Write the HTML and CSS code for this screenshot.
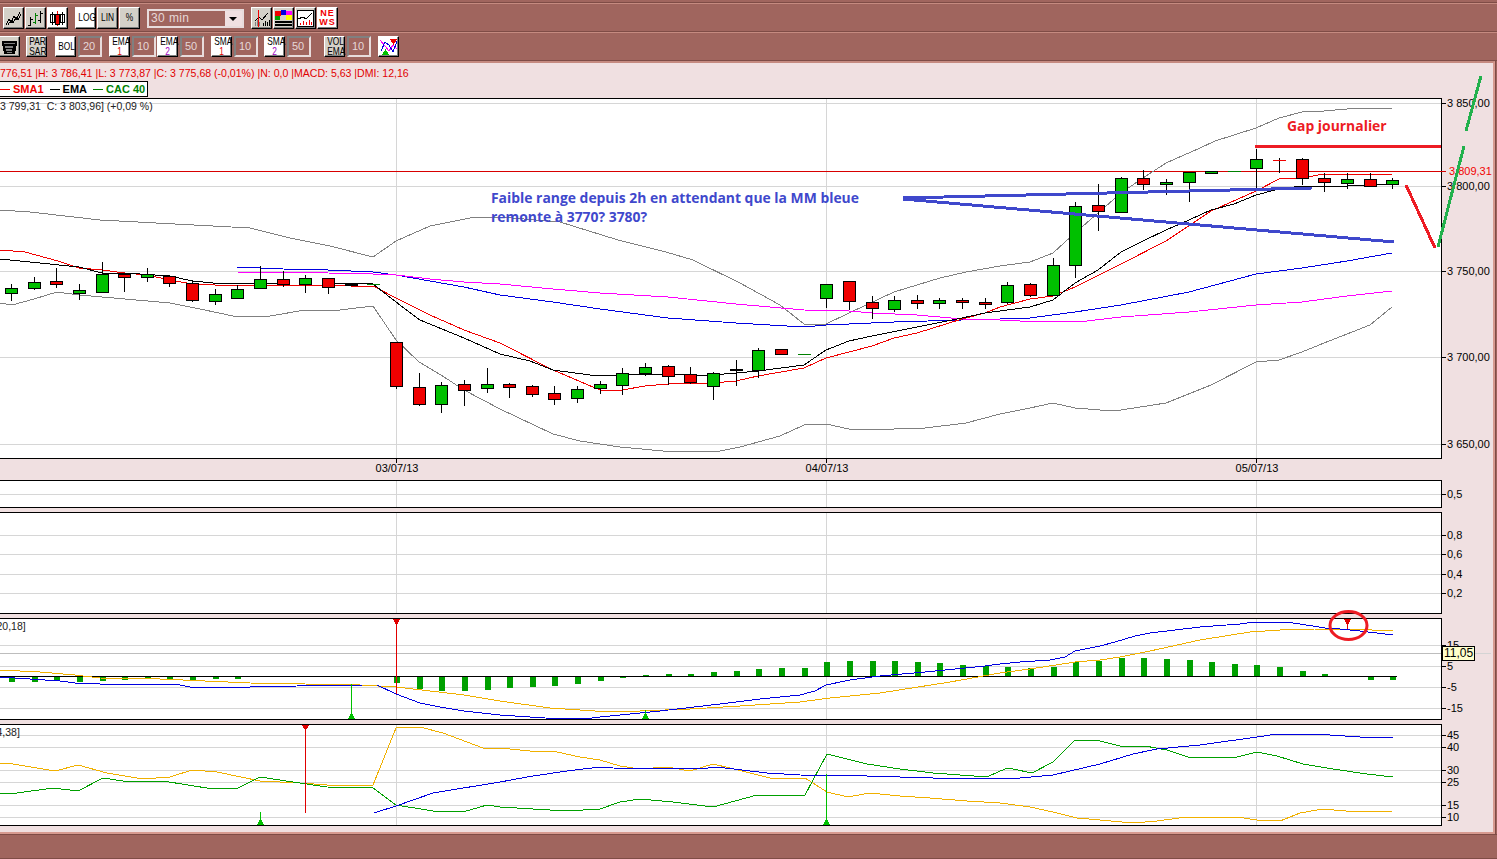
FILE: index.html
```html
<!DOCTYPE html>
<html lang="fr">
<head>
<meta charset="utf-8">
<title>CAC 40 - 30 min</title>
<link rel="stylesheet" href="styles.css">
</head>
<body>
<div class="app">
  <div class="toolbar t1">
    <div class="group">
      <button class="btn"><svg viewBox="0 0 19 19"><path class="ik" d="M2 16L5 10 7 14 10 7 12 11 16 3M4 16L7 11 9 14 12 8 14 11 17 5"/></svg></button>
      <button class="btn"><svg viewBox="0 0 19 19"><path class="ik" d="M4.5 8V17M2 16H4.5M4.5 10H7M14.5 2V14M12 11H14.5M14.5 4H17"/><path class="ig" d="M9.5 4V15M7 13H9.5M9.5 6H12"/></svg></button>
      <button class="btn on"><svg viewBox="0 0 19 19"><path class="ik" d="M4.5 3V16M14.5 3V16"/><path class="iw" d="M3.500 5.500h3v8h-3zM13.500 5.500h3v8h-3z"/><path class="ik" d="M2.500 5.500h4v8h-4zM12.500 5.500h4v8h-4z"/><path class="ir2" d="M9.500 2V17"/><path class="ir" d="M7.500 5.500h4v10h-4z"/></svg></button>
    </div>
    <div class="group">
      <button class="btn on"><span class="cap">LOG</span></button>
      <button class="btn"><span class="cap">LIN</span></button>
      <button class="btn"><span class="cap">%</span></button>
    </div>
    <div class="select"><span class="select-value">30 min</span><span class="select-arrow"></span></div>
    <div class="group">
      <button class="btn"><svg viewBox="0 0 19 19"><path class="igy" d="M3 17V13M5 17V11M7 17V13"/><path class="ik" d="M11 17V14M13 17V12M15 17V13M17 17V11M3 12L7 8 10 11 16 4"/><path class="ir2" d="M6.500 1V18"/></svg></button>
      <button class="btn"><svg viewBox="0 0 19 19"><path fill="#f00000" d="M1 2h6v5H1z"/><path fill="#0000e0" d="M7 1h5v5H7z"/><path fill="#ff00ff" d="M12 2h6v4h-6z"/><path fill="#00a000" d="M1 7h5v4H1z"/><path fill="#ffff00" d="M12 6h6v5h-6z"/><path fill="#000" d="M1 12h17v2H1zM1 15h17v2H1z"/></svg></button>
      <button class="btn"><svg viewBox="0 0 19 19"><path fill="#fff" d="M1 1h17v17H1z"/><path class="ik" d="M1.500 1.500h16v16h-16zM2 10L7 8 10 10 16 4"/><path class="ir2" d="M4.500 16V14M7.500 16V12M10.500 16V13M13.500 16V11M15.500 16V13"/></svg></button>
      <button class="btn on news"><span>NE</span><span>WS</span></button>
    </div>
  </div>
  <div class="toolbar t2">
    <button class="btn trash"><svg viewBox="0 0 19 19"><path fill="#000" d="M2 4h15v2l-2 11H4L2 6z"/><path class="igy" d="M4 6.500h11M5 9.500l1 1 1-1 1 1 1-1 1 1 1-1 1 1 1-1M6 12.500l1 1 1-1 1 1 1-1 1 1 1-1M7 15.500h5"/></svg></button>
    <button class="btn m6"><span class="cap">PAR</span><span class="cap">SAR</span></button>
    <button class="btn on m8"><span class="cap">BOL</span></button>
    <div class="num">20</div>
    <button class="btn on m7"><span class="cap">EMA</span><span class="cap c1">1</span></button>
    <div class="num">10</div>
    <button class="btn on m1"><span class="cap">EMA</span><span class="cap c2">2</span></button>
    <div class="num">50</div>
    <button class="btn on m7"><span class="cap">SMA</span><span class="cap c1">1</span></button>
    <div class="num">10</div>
    <button class="btn on m6"><span class="cap">SMA</span><span class="cap c2">2</span></button>
    <div class="num">50</div>
    <button class="btn m13"><span class="cap">VOL</span><span class="cap">EMA</span></button>
    <div class="num">10</div>
    <button class="btn on m7"><svg viewBox="0 0 19 19"><path class="im" d="M1 3L6 9 10 14 14 8 18 12"/><path class="ib" d="M2 14L6 5 10 8 14 15 18 4"/><path fill="#f00000" d="M11 2h7l-3.500 6z"/><path fill="#00c000" d="M3 18l3.500-6 3.500 6z"/></svg></button>
  </div>

  <div class="workspace">
    <div class="info">776,51 |H: 3 786,41 |L: 3 773,87 |C: 3 775,68 (-0,01%) |N: 0,0 |MACD: 5,63 |DMI: 12,16</div>
    <div class="legend">
      <span class="key key-red"></span><b class="red">SMA1</b>
      <span class="key key-black"></span><b>EMA</b>
      <span class="key key-green"></span><b class="green">CAC 40</b>
    </div>

    <svg class="pane pane-main" viewBox="0 98 1493 382">
      <rect class="plot" x="-2" y="98.500" width="1443.500" height="360"/>
      <path class="grid" d="M0 103.500H1441M0 186.500H1441M0 271.500H1441M0 357.500H1441M0 444.500H1441M396.500 99V458M826.500 99V458M1256.500 99V458"/>
      <path class="frame" d="M1441 103.500H1446M1441 186.500H1446M1441 271.500H1446M1441 357.500H1446M1441 444.500H1446M396.500 458V463M826.500 458V463M1256.500 458V463"/>
      <text class="lbl" x="0" y="110" xml:space="preserve">3 799,31  C: 3 803,96] (+0,09 %)</text>
      <path class="last" d="M0 171.500H1446"/>
      <polyline class="boll" points="0,210 30,212 100,220 175,224 250,228 290,238 330,246 373,257 396,241 430,226 470,218 500,217 560,222 618,240 666,252 693,260 740,283 780,305 804,324 826,324 849,313 894,292 940,278 966,272 1000,266 1030,262 1053,253 1075,233 1121,193 1143,178 1166,163 1200,148 1215,141 1256,128 1279,118 1302,112 1324,111 1347,109 1370,108 1392,109"/>
      <polyline class="boll" points="0,303 12,305 34,299 57,292 79,295 102,297 125,299 170,303 200,309 233,316 270,316 305,310 340,310 373,306 396,340 419,362 441,375 464,390 500,409 553,434 580,441 620,447 663,451 690,452 720,451 740,447 780,436 804,425 826,424 849,429 894,429 925,428 966,423 1000,414 1030,408 1053,403 1075,408 1100,410 1121,410 1166,403 1211,385 1256,362 1279,360 1302,352 1324,343 1370,325 1392,307"/>
      <polyline class="ma-blue" points="237,267 283,269 328,270 373,272 396,275 430,281 464,287 500,295 553,302 600,309 668,318 736,323 804,327 826,325 849,324 894,322 962,320 1000,319 1030,318 1075,312 1121,305 1189,292 1256,274 1302,268 1347,261 1392,253"/>
      <polyline class="ma-mag" points="237,272 328,273 373,274 396,275 430,279 464,282 500,284 553,289 600,293 668,297 736,304 781,308 804,310 849,311 872,313 917,315 962,319 1000,320 1020,321 1087,321 1121,317 1189,312 1256,305 1302,302 1347,296 1392,291"/>
      <polyline class="ma-red" points="0,250 25,252 58,261 79,268 102,270 125,273 147,275 170,280 192,284 215,285 283,285 328,285 351,286 373,286 396,298 430,315 464,330 500,343 553,370 600,390 622,390 645,386 668,384 713,383 736,381 758,376 804,368 826,358 849,352 872,346 894,338 917,333 962,319 985,313 1000,307 1030,299 1053,296 1075,287 1121,264 1166,241 1211,211 1256,191 1279,179 1302,178 1324,174 1392,174"/>
      <polyline class="ma-black" points="0,259 30,262 79,267 102,273 125,273 170,276 192,281 213,283 237,284 283,283 328,283 373,284 396,302 420,320 464,338 500,354 530,361 553,370 590,375 600,375 622,375 668,374 700,376 736,373 758,371 804,365 826,350 849,341 872,336 917,327 962,318 985,313 1000,311 1030,307 1053,300 1075,283 1098,270 1121,252 1143,241 1166,230 1189,220 1211,210 1234,204 1256,195 1279,189 1302,186 1347,186 1392,184"/>
      <path class="frame" d="M11.500 284V301M34.500 277V290M56.500 268V288M79.500 284V300M102.500 262V292M124.500 273V292M147.500 268V282M169.500 275V287M192.500 280V302M215.500 289V305M237.500 285V299M260.500 266V289M283.500 271V287M305.500 275V293M328.500 278V294M396.500 342V389M419.500 373V406M441.500 382V413M464.500 380V406M487.500 368V393M509.500 383V398M532.500 385V397M554.500 386V405M577.500 386V403M600.500 381V394M622.500 368V395M645.500 363V376M668.500 365V385M690.500 367V384M713.500 372V400M736.500 360V386M758.500 348V378M826.500 284V308M849.500 281V310M872.500 296V319M894.500 296V312M917.500 295V309M939.500 298V309M962.500 298V309M985.500 298V309M1007.500 282V304M1030.500 283V297M1053.500 258V296M1075.500 202V278M1098.500 184V231M1121.500 177V213M1143.500 170V190M1166.500 179V195M1189.500 172V202M1256.500 149V190M1279.500 158V173M1302.500 158V185M1324.500 173V192M1347.500 173V189M1370.500 173V187M1392.500 178V189"/>
      <path class="up" d="M5.500 288.500h12v5h-12zM28.500 282.500h12v6h-12zM73.500 290.500h12v3h-12zM96.500 274.500h12v18h-12zM141.500 274.500h12v3h-12zM209.500 294.500h12v7h-12zM231.500 289.500h12v9h-12zM254.500 279.500h12v9h-12zM299.500 278.500h12v6h-12zM435.500 385.500h12v19h-12zM481.500 384.500h12v4h-12zM571.500 389.500h12v9h-12zM594.500 384.500h12v4h-12zM616.500 373.500h12v12h-12zM639.500 367.500h12v6h-12zM707.500 373.500h12v13h-12zM752.500 350.500h12v20h-12zM820.500 284.500h12v14h-12zM888.500 300.500h12v9h-12zM933.500 300.500h12v3h-12zM1001.500 285.500h12v17h-12zM1047.500 265.500h12v30h-12zM1069.500 206.500h12v59h-12zM1115.500 178.500h12v34h-12zM1160.500 182.500h12v2h-12zM1183.500 172.500h12v10h-12zM1205.500 171.500h12v2h-12zM1250.500 159.500h12v9h-12zM1341.500 179.500h12v4h-12zM1386.500 180.500h12v4h-12z"/>
      <path class="down" d="M50.500 281.500h12v3h-12zM118.500 274.500h12v3h-12zM163.500 276.500h12v7h-12zM186.500 283.500h12v17h-12zM277.500 279.500h12v5h-12zM322.500 278.500h12v9h-12zM390.500 342.500h12v44h-12zM413.500 387.500h12v17h-12zM458.500 384.500h12v6h-12zM503.500 384.500h12v3h-12zM526.500 386.500h12v8h-12zM548.500 393.500h12v6h-12zM662.500 366.500h12v10h-12zM684.500 374.500h12v8h-12zM775.500 349.500h12v5h-12zM843.500 281.500h12v20h-12zM866.500 302.500h12v6h-12zM911.500 300.500h12v3h-12zM956.500 300.500h12v2h-12zM979.500 302.500h12v2h-12zM1024.500 284.500h12v11h-12zM1092.500 205.500h12v6h-12zM1137.500 178.500h12v6h-12zM1296.500 159.500h12v19h-12zM1318.500 178.500h12v4h-12zM1364.500 179.500h12v7h-12z"/>
      <path class="doji-k" d="M345 285h13M730 370h13"/>
      <path class="doji-g" d="M367 284.500h13M798 354.500h13M1228 171.500h13"/>
      <path class="doji-r" d="M1273 160.500h13"/>
      <text class="ax" x="1447" y="107">3 850,00</text>
      <text class="ax" x="1447" y="190">3 800,00</text>
      <text class="ax" x="1447" y="275">3 750,00</text>
      <text class="ax" x="1447" y="361">3 700,00</text>
      <text class="ax" x="1447" y="448">3 650,00</text>
      <text class="ax last-label" x="1449" y="175">3 809,31</text>
      <text class="ax" x="397" y="472" text-anchor="middle">03/07/13</text>
      <text class="ax" x="827" y="472" text-anchor="middle">04/07/13</text>
      <text class="ax" x="1257" y="472" text-anchor="middle">05/07/13</text>
    </svg>

    <svg class="pane pane-vol" viewBox="0 480 1493 32">
      <rect class="plot" x="-2" y="480.500" width="1443.500" height="27"/>
      <path class="grid" d="M0 494.500H1441M396.500 481V507M826.500 481V507M1256.500 481V507"/>
      <path class="frame" d="M1441 494.500H1446"/>
      <text class="ax" x="1447" y="498">0,5</text>
    </svg>

    <svg class="pane pane-osc" viewBox="0 512 1493 106">
      <rect class="plot" x="-2" y="512.500" width="1443.500" height="101"/>
      <path class="grid" d="M0 535.500H1441M0 554.500H1441M0 574.500H1441M0 593.500H1441M396.500 513V613M826.500 513V613M1256.500 513V613"/>
      <path class="frame" d="M1441 535.500H1446M1441 554.500H1446M1441 574.500H1446M1441 593.500H1446"/>
      <text class="ax" x="1447" y="539">0,8</text>
      <text class="ax" x="1447" y="558">0,6</text>
      <text class="ax" x="1447" y="578">0,4</text>
      <text class="ax" x="1447" y="597">0,2</text>
    </svg>

    <svg class="pane pane-macd" viewBox="0 618 1493 106">
      <rect class="plot" x="-2" y="618.500" width="1443.500" height="101"/>
      <path class="grid" d="M0 645.500H1441M0 666.500H1441M0 687.500H1441M0 708.500H1441M396.500 619V719M826.500 619V719M1256.500 619V719"/>
      <path class="cross" d="M0 653.500H1441"/>
      <path class="cross-out" d="M1475 653.500H1491"/>
      <path class="frame" d="M1441 645.500H1446M1441 666.500H1446M1441 687.500H1446M1441 708.500H1446"/>
      <text class="lbl" x="-3.500" y="630">20,18]</text>
      <path class="hist" d="M9 676v6h6v-6zM32 676v6h6v-6zM54 676v5h6v-5zM77 676v6h6v-6zM100 676v5h6v-5zM122 676v4h6v-4zM145 676v2h6v-2zM167 676v3h6v-3zM190 676v4h6v-4zM213 676v3h6v-3zM235 676v3h6v-3zM258 676v1h6v-1zM394 676v7h6v-7zM417 676v13h6v-13zM439 676v15h6v-15zM462 676v15h6v-15zM485 676v14h6v-14zM507 676v12h6v-12zM530 676v11h6v-11zM552 676v10h6v-10zM575 676v8h6v-8zM598 676v5h6v-5zM620 676v2h6v-2zM643 676v-1h6v1zM666 676v-2h6v2zM688 676v-2h6v2zM711 676v-4h6v4zM734 676v-5h6v5zM756 676v-7h6v7zM779 676v-8h6v8zM802 676v-8h6v8zM824 676v-14h6v14zM847 676v-15h6v15zM870 676v-15h6v15zM892 676v-15h6v15zM915 676v-14h6v14zM937 676v-13h6v13zM960 676v-11h6v11zM983 676v-10h6v10zM1005 676v-9h6v9zM1028 676v-8h6v8zM1051 676v-9h6v9zM1073 676v-14h6v14zM1096 676v-15h6v15zM1119 676v-18h6v18zM1141 676v-18h6v18zM1164 676v-17h6v17zM1187 676v-16h6v16zM1209 676v-14h6v14zM1232 676v-12h6v12zM1254 676v-11h6v11zM1277 676v-9h6v9zM1300 676v-5h6v5zM1322 676v-2h6v2zM1368 676v4h6v-4zM1390 676v4h6v-4z"/>
      <path class="zero" d="M0 676.500H1397"/>
      <polyline class="l-yel" points="0,670 40,672 75,675 100,678 160,679 250,683 360,685 396,687 430,691 464,695 500,701 550,708 595,711 640,711 690,709 740,706 800,702 830,698 880,693 950,682 1000,673 1030,669 1075,662 1100,660 1120,657 1150,651 1200,640 1250,632 1280,630 1315,629 1350,629 1393,631"/>
      <polyline class="l-blue" points="0,677 30,679 60,681 75,683 100,684 175,684 190,687 250,687 297,686 363,685 377,685 396,694 420,703 440,707 464,711 500,715 545,718 585,719 600,717 640,713 660,711 720,704 760,699 800,695 815,691 826,685 850,680 880,676 925,672 985,666 1000,664 1020,662 1050,660 1065,657 1075,651 1100,646 1115,642 1135,636 1150,633 1200,627 1240,624 1255,622 1285,622 1300,624 1325,628 1340,629 1360,631 1393,635"/>
      <path class="sig-r" d="M396.500 619V694M1347.500 619V629"/>
      <path class="sig-g" d="M351.500 684V719M645.500 710V719"/>
      <path class="tri-r" d="M393 619h7l-3.500 7zM1344 619h7l-3.500 7z"/>
      <path class="tri-g" d="M348 719l3.500-7 3.500 7zM642 719l3.500-7 3.500 7z"/>
      <text class="ax" x="1447" y="649">15</text>
      <text class="ax" x="1447" y="670">5</text>
      <text class="ax" x="1447" y="691">-5</text>
      <text class="ax" x="1447" y="712">-15</text>
    </svg>

    <svg class="pane pane-dmi" viewBox="0 724 1493 108">
      <rect class="plot" x="-2" y="724.500" width="1443.500" height="101"/>
      <path class="grid" d="M0 735.500H1441M0 747.500H1441M0 770.500H1441M0 782.500H1441M0 805.500H1441M0 817.500H1441M396.500 725V825M826.500 725V825M1256.500 725V825"/>
      <path class="frame" d="M1441 735.500H1446M1441 747.500H1446M1441 770.500H1446M1441 782.500H1446M1441 805.500H1446M1441 817.500H1446"/>
      <text class="lbl" x="-3.500" y="736">4,38]</text>
      <polyline class="l-yel" points="0,763 13,764 55,771 78,765 107,773 143,779 170,777 192,770 217,772 260,781 300,783 327,785 373,785 396,728 420,727 443,733 483,748 500,748 530,751 557,752 580,757 600,760 620,766 640,769 667,767 690,771 713,764 730,768 750,773 770,778 805,778 827,792 848,797 870,793 900,796 930,798 967,801 1000,803 1030,807 1053,812 1077,818 1100,820 1133,823 1157,821 1187,817 1237,817 1257,820 1280,821 1300,813 1323,809 1357,812 1393,811"/>
      <polyline class="l-grn" points="0,793 10,794 53,788 78,791 103,778 123,781 163,781 213,789 238,788 260,777 293,782 327,787 373,788 396,805 433,811 463,812 487,805 500,807 533,809 567,811 600,809 620,802 640,799 673,802 713,807 757,795 805,795 827,754 867,764 900,769 933,773 987,777 1000,771 1008,768 1032,773 1053,762 1075,740 1100,741 1120,746 1145,746 1167,750 1188,757 1237,757 1257,752 1277,756 1303,764 1333,769 1367,774 1393,777"/>
      <polyline class="l-blue" points="374,813 396,806 433,793 500,782 533,776 567,771 600,767 613,768 700,769 717,767 767,773 800,775 867,776 933,778 1020,778 1053,775 1100,764 1133,754 1157,749 1200,745 1257,737 1277,734 1315,734 1360,737 1393,738"/>
      <path class="sig-r" d="M305.500 725V813"/>
      <path class="sig-g" d="M260.500 812V825M826.500 774V825"/>
      <path class="tri-r" d="M302 725h7l-3.500 6z"/>
      <path class="tri-g" d="M257 825l3.500-7 3.500 7zM823 825l3.500-7 3.500 7z"/>
      <text class="ax" x="1447" y="739">45</text>
      <text class="ax" x="1447" y="751">40</text>
      <text class="ax" x="1447" y="774">30</text>
      <text class="ax" x="1447" y="786">25</text>
      <text class="ax" x="1447" y="809">15</text>
      <text class="ax" x="1447" y="821">10</text>
    </svg>

    <div class="tooltip">11,05</div>

    <svg class="overlay" viewBox="0 63 1493 769">
      <text class="note note-blue" x="491" y="203">Faible range depuis 2h en attendant que la MM bleue</text>
      <text class="note note-blue" x="491" y="222">remonte à 3770? 3780?</text>
      <text class="note note-red" x="1287" y="131">Gap journalier</text>
      <path class="pen pen-blue" d="M903 198L1312 188M903 199L1394 242"/>
      <path class="pen pen-red" d="M1255 146.500H1441M1406 185L1435 248"/>
      <path class="pen pen-green" d="M1438 247L1464 146M1466 131L1481 76"/>
      <ellipse class="pen-circle" cx="1348.500" cy="625.500" rx="18.500" ry="14"/>
    </svg>
  </div>

  <div class="statusbar"></div>
</div>
</body>
</html>
```

FILE: styles.css
```css
* { box-sizing: border-box; }
html, body { margin: 0; padding: 0; }
body { font-family: "Liberation Sans", Arial, sans-serif; background: #a0655e; }

.app {
  width: 1497px;
  height: 859px;
  display: flex;
  flex-direction: column;
  overflow: hidden;
  background: #a0655e;
}

/* toolbars */
.toolbar { display: flex; align-items: flex-start; flex: none; }
.t1 {
  height: 32px;
  padding: 7px 0 0 3px;
  background: linear-gradient(#a0655e 0 2px, #7f4c46 2px 3px, #c58a80 3px 4px, #a0655e 4px);
  border-bottom: 1px solid #7f4c46;
  gap: 7px;
}
.t2 {
  height: 29px;
  padding: 3px 0 0 0;
  border-top: 1px solid #c58a80;
  border-bottom: 1px solid #7f4c46;
}
.group { display: flex; gap: 1px; }

.btn {
  width: 21px;
  height: 22px;
  padding: 0;
  margin: 0;
  flex: none;
  display: flex;
  flex-direction: column;
  align-items: center;
  justify-content: center;
  background: #d4d0c8;
  color: #000;
  border: 1px solid;
  border-color: #fff #000 #000 #fff;
  box-shadow: inset -1px -1px 0 #808080;
  font-family: "Liberation Sans", Arial, sans-serif;
}
.t2 .btn { height: 21px; }
.btn svg { width: 19px; height: 19px; display: block; shape-rendering: crispEdges; }
.btn.on { background: #fff; }
.cap {
  display: block;
  width: 19px;
  flex: none;
  text-align: center;
  white-space: nowrap;
  font-size: 11px;
  line-height: 9.500px;
  transform: scaleX(.76);
}
.c1 { color: #e00000; }
.c2 { color: #a000c0; }
.btn.news {
  font-size: 9px;
  font-weight: 700;
  color: #f00000;
  line-height: 9px;
  letter-spacing: 1px;
}
.btn.trash { margin-left: -1px; background: #d4d0c8; }
.m1 { margin-left: 1px; }
.m6 { margin-left: 6px; }
.m7 { margin-left: 7px; }
.m8 { margin-left: 8px; }
.m13 { margin-left: 13px; }

.ik, .iw, .ir2, .ig, .igy, .im, .ib { fill: none; stroke-width: 1; }
.ik { stroke: #000; }
.iw { stroke: #fff; }
.ir2 { stroke: #f00000; }
.ig { stroke: #008000; }
.igy { stroke: #808080; }
.im { stroke: #ff00ff; }
.ib { stroke: #0000e0; }
.ir { fill: #f00000; stroke: #000; }

.num {
  width: 24px;
  height: 21px;
  margin-left: 2px;
  flex: none;
  padding-left: 3px;
  border: 2px solid;
  border-color: #808080 #e8dcdc #e8dcdc #808080;
  color: #e6d8d8;
  font-size: 11px;
  line-height: 17px;
}

.select {
  width: 97px;
  height: 19px;
  margin-top: 2px;
  display: flex;
  border: 2px solid;
  border-color: #e8dcdc;
}
.select-value {
  flex: 1;
  padding-left: 2px;
  color: #e6d8d8;
  font-size: 12px;
  letter-spacing: .4px;
  line-height: 15px;
}
.select-arrow {
  width: 17px;
  background: #f0e0e1;
  position: relative;
}
.select-arrow::after {
  content: "";
  position: absolute;
  left: 4px;
  top: 6px;
  border: 4px solid transparent;
  border-top-color: #000;
  border-bottom-width: 0;
}

/* workspace */
.workspace {
  position: relative;
  width: 1495px;
  height: 773px;
  flex: none;
  background: #f0e0e1;
  border-top: 2px solid #c58a80;
  border-right: 2px solid #d79a90;
  border-bottom: 2px solid #d79a90;
  box-shadow: 1px 0 0 #7f4c46;
}
.info {
  height: 18px;
  color: #e00000;
  font-size: 10.55px;
  line-height: 21px;
  white-space: nowrap;
}
.legend {
  display: flex;
  width: fit-content;
  align-items: center;
  height: 16px;
  margin-bottom: 1px;
  padding-right: 2px;
  background: #fff;
  border: 1px solid #000;
  border-left: 0;
  font-size: 11px;
}
.legend b { color: #000; }
.legend .red { color: #f00000; }
.legend .green { color: #008000; }
.key { width: 10px; height: 1px; margin: 0 3px 0 6px; }
.key-red { background: #f00000; margin-left: 0; }
.key-black { background: #000; }
.key-green { background: #008000; }

/* panes */
.pane { display: block; width: 1493px; shape-rendering: crispEdges; }
.pane-main { height: 382px; }
.pane-vol { height: 32px; }
.pane-osc { height: 106px; }
.pane-macd { height: 106px; }
.pane-dmi { height: 108px; }

.plot { fill: #fff; stroke: #000; stroke-width: 1; }
.grid { fill: none; stroke: #d6d6d6; stroke-width: 1; }
.frame { fill: none; stroke: #000; stroke-width: 1; }
.cross { fill: none; stroke: #bdbdbd; stroke-width: 1; }
.cross-out { fill: none; stroke: #d4d4d4; stroke-width: 1; }
.last { fill: none; stroke: #d80000; stroke-width: 1; }
.zero { fill: none; stroke: #000; stroke-width: 1; }
.boll { fill: none; stroke: #808080; stroke-width: 1; }
.ma-blue, .l-blue { fill: none; stroke: #0000e0; stroke-width: 1; }
.ma-mag { fill: none; stroke: #ff00ff; stroke-width: 1; }
.ma-red { fill: none; stroke: #f00000; stroke-width: 1; }
.ma-black { fill: none; stroke: #000; stroke-width: 1; }
.l-yel { fill: none; stroke: #f0b000; stroke-width: 1; }
.l-grn { fill: none; stroke: #00a000; stroke-width: 1; }
.up { fill: #00c000; stroke: #000; stroke-width: 1; }
.down { fill: #f00000; stroke: #000; stroke-width: 1; }
.doji-k { fill: none; stroke: #000; stroke-width: 2; }
.doji-g { fill: none; stroke: #008000; stroke-width: 1; }
.doji-r { fill: none; stroke: #f00000; stroke-width: 1; }
.hist { fill: #00a000; }
.sig-r { fill: none; stroke: #e00000; stroke-width: 1; }
.sig-g { fill: none; stroke: #00c000; stroke-width: 1; }
.tri-r { fill: #e00000; }
.tri-g { fill: #00c000; }

.ax, .lbl {
  font-family: "Liberation Sans", Arial, sans-serif;
  fill: #000;
  shape-rendering: auto;
}
.ax { font-size: 11px; }
.lbl { font-size: 10.5px; fill: #222; }
.last-label { fill: #f00000; }

.tooltip {
  position: absolute;
  left: 1442px;
  top: 583px;
  width: 33px;
  height: 15px;
  background: #ffffcc;
  border: 1px solid #000;
  font-size: 12px;
  line-height: 13px;
  text-align: center;
}

/* hand-drawn annotations over the chart */
.overlay {
  position: absolute;
  left: 0;
  top: 0;
  width: 1493px;
  height: 769px;
  pointer-events: none;
}
.note {
  font-family: "Open Sans", sans-serif;
  font-size: 13.9px;
  font-weight: 700;
}
.note-blue { fill: #3f48cc; }
.note-red { fill: #ed1c24; }
.pen { fill: none; stroke-width: 3; shape-rendering: crispEdges; }
.pen-blue { stroke: #3f48cc; }
.pen-red { stroke: #ed1c24; }
.pen-green { stroke: #22b14c; }
.pen-circle { fill: none; stroke: #ed1c24; stroke-width: 3; }

.statusbar {
  flex: 1;
  border-top: 1px solid #7f4c46;
  border-bottom: 1px solid #7f4c46;
}
```
